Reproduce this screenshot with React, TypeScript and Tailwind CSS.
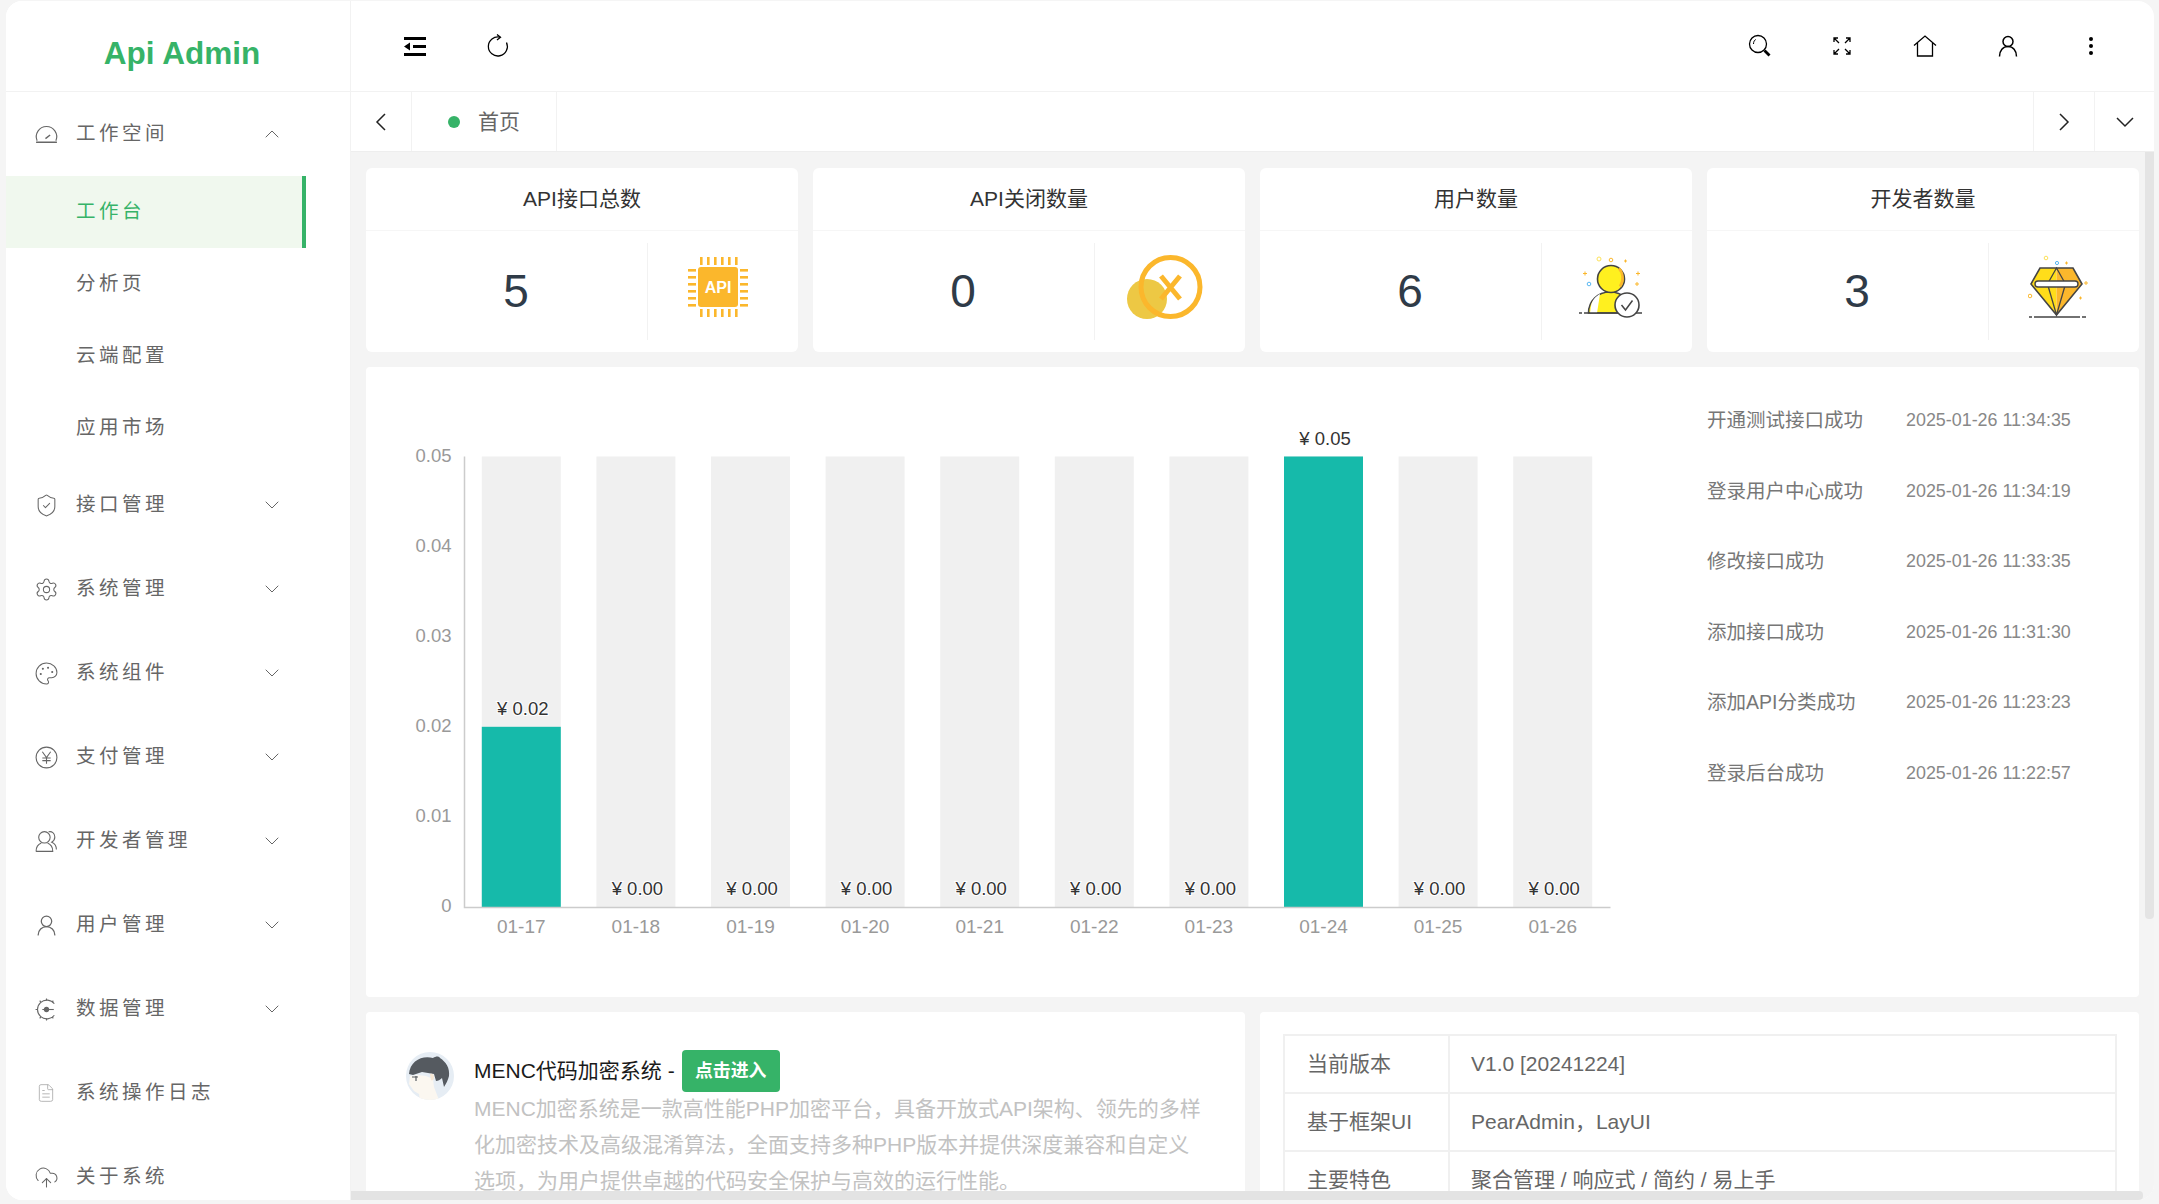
import type { ReactNode } from "react";
import { ChevronDown, ChevronUp, CloudUpload, FileText, Palette, Settings, ShieldCheck, UserRound } from "lucide-react";

const GaugeIcon = () => (
  <svg width="25" height="25" viewBox="0 0 24 24" fill="none" stroke="currentColor" strokeWidth="1.100">
    <path d="M3 18a9.800 9.800 0 1 1 18 0" />
    <path d="M2 19.500h20" strokeWidth="1.400" />
    <path d="M11 16l4.500-3.500" strokeWidth="1.400" />
  </svg>
);

const YenIcon = () => (
  <svg width="25" height="25" viewBox="0 0 24 24" fill="none" stroke="currentColor" strokeWidth="1.050">
    <circle cx="12" cy="12" r="10" />
    <path d="M8 6.500l4 5.500 4-5.500M12 12v6M8 12.500h8M8 15h8" />
  </svg>
);

const DataIcon = () => (
  <svg width="25" height="25" viewBox="0 0 24 24" fill="none" stroke="currentColor" strokeWidth="1.050">
    <path d="M19.500 6.500A9 9 0 1 0 19.500 17.500" />
    <path d="M12 1.500v1.800M5.500 3.500l1 1.400M18.500 3.500l-1 1.400M12 20.700v1.800M5.500 20.500l1-1.400M18.500 20.500l-1-1.400M1.500 12h1.800" />
    <path d="M8 12h11" />
    <circle cx="12" cy="12" r="2" fill="currentColor" />
  </svg>
);

const DevIcon = () => (
  <svg width="25" height="25" viewBox="0 0 24 24" fill="none" stroke="currentColor" strokeWidth="1.050">
    <circle cx="10" cy="8" r="5.500" />
    <path d="M2 21.500c0-4.500 2.500-7 5-8M13 13.500c2.500 1 5 3.500 5 8H2" />
    <path d="M14 2.700c3-.7 6 1 6 5 0 2.500-1.500 4-3 5 2.500 1 4.500 4 4.500 7" />
  </svg>
);

const menuTop = [
  { label: "接口管理", icon: <ShieldCheck size={25} strokeWidth={1} />, arrow: true },
  { label: "系统管理", icon: <Settings size={25} strokeWidth={1} />, arrow: true },
  { label: "系统组件", icon: <Palette size={25} strokeWidth={1} />, arrow: true },
  { label: "支付管理", icon: <YenIcon />, arrow: true },
  { label: "开发者管理", icon: <DevIcon />, arrow: true },
  { label: "用户管理", icon: <UserRound size={25} strokeWidth={1.2} />, arrow: true },
  { label: "数据管理", icon: <DataIcon />, arrow: true },
  { label: "系统操作日志", icon: <FileText size={20} strokeWidth={1} className="ml-[2px] text-[#aaa]" />, arrow: false },
  { label: "关于系统", icon: <CloudUpload size={25} strokeWidth={1} />, arrow: false },
];

function ApiIcon() {
  const pins = [12, 19, 26, 33, 40, 47];
  return (
    <svg width="60" height="60" viewBox="0 0 60 60">
      {pins.map((p) => (
        <g key={p} fill="#fbb72c">
          <rect x={p} y="0" width="2.6" height="8" />
          <rect x={p} y="52" width="2.6" height="8" />
          <rect x="0" y={p} width="8" height="2.6" />
          <rect x="52" y={p} width="8" height="2.6" />
        </g>
      ))}
      <rect x="10" y="10" width="40" height="40" rx="3" fill="#fbb72c" />
      <text x="30" y="35.5" textAnchor="middle" fontSize="16" fontWeight="700" fill="#fff">API</text>
    </svg>
  );
}

function CloseIcon() {
  return (
    <svg width="76" height="64" viewBox="0 0 76 64" fill="none">
      <circle cx="20" cy="44" r="20" fill="#edc844" />
      <circle cx="43.5" cy="32" r="29.5" stroke="#fbb72c" strokeWidth="5" />
      <path d="M34 21l19 23M53 21L34 44" stroke="#fbb72c" strokeWidth="5" />
    </svg>
  );
}

function UserBadgeIcon() {
  return (
    <svg width="66" height="62" viewBox="0 0 66 62" fill="none">
      <path d="M9.5 57c0-12 9-21 21.5-21s22 9 22 21z" fill="#fff01f" stroke="#444" strokeWidth="1.5" />
      <path d="M12 50c1-6 5-10 9-12l-3 19h-7z" fill="#fff" />
      <ellipse cx="32" cy="23" rx="13.5" ry="13.5" fill="#fff01f" stroke="#444" strokeWidth="1.6" />
      <path d="M40 12.5c4 4 5 12 1 18" stroke="#fbb72c" strokeWidth="2.5" />
      <path d="M0 57h66" stroke="#444" strokeWidth="1.5" strokeDasharray="3 2 50 2 6" />
      <circle cx="48" cy="49" r="12" fill="#fff" stroke="#444" strokeWidth="1.6" />
      <path d="M42.5 49l4 5 7-9.5" stroke="#444" strokeWidth="1.5" />
      <circle cx="10" cy="28" r="1.8" stroke="#5ab8f2" />
      <circle cx="20" cy="3" r="2" stroke="#fde25a" />
      <circle cx="32" cy="4" r="1.8" stroke="#fbb72c" />
      <path d="M45 5h3M46.500 3.500v3M4 17.500h4M6 15.500v4M57 17.500h4M59 15.500v4M56 28h4M58 26v4" stroke="#fbb72c" />
    </svg>
  );
}

function DiamondIcon() {
  return (
    <svg width="62" height="63" viewBox="0 0 62 63" fill="none">
      <path d="M12 13h16.500v47L3 29z" fill="#ffdd1a" />
      <path d="M28.500 13H45l9 16-25.500 31z" fill="#fbb72c" />
      <path d="M12 13h33l9 16-25.500 31L3 29z" stroke="#444" strokeWidth="1.6" />
      <path d="M28.500 13l-9 16 9 31 9-31zM19 29h19" stroke="#444" strokeWidth="1.3" />
      <rect x="7" y="26" width="43" height="6" rx="3" fill="#fff" stroke="#444" strokeWidth="1.4" />
      <path d="M1 62h57" stroke="#444" strokeWidth="1.6" strokeDasharray="3 2 46 2 4" />
      <circle cx="18" cy="3" r="1.8" stroke="#fde25a" />
      <circle cx="29" cy="8" r="1.6" stroke="#5ab8f2" />
      <circle cx="2" cy="41" r="1.8" stroke="#fbb72c" />
      <path d="M37 8h3M38.500 6.500v3M56 28h4M58 26v4M51 43h3M52.500 41.500v3" stroke="#fbb72c" />
    </svg>
  );
}

const stats: { title: string; value: number; icon: ReactNode }[] = [
  { title: "API接口总数", value: 5, icon: <ApiIcon /> },
  { title: "API关闭数量", value: 0, icon: <CloseIcon /> },
  { title: "用户数量", value: 6, icon: <UserBadgeIcon /> },
  { title: "开发者数量", value: 3, icon: <DiamondIcon /> },
];

const logs = [
  ["开通测试接口成功", "2025-01-26 11:34:35"],
  ["登录用户中心成功", "2025-01-26 11:34:19"],
  ["修改接口成功", "2025-01-26 11:33:35"],
  ["添加接口成功", "2025-01-26 11:31:30"],
  ["添加API分类成功", "2025-01-26 11:23:23"],
  ["登录后台成功", "2025-01-26 11:22:57"],
];

const bars = [
  { day: "01-17", value: 0.02 },
  { day: "01-18", value: 0 },
  { day: "01-19", value: 0 },
  { day: "01-20", value: 0 },
  { day: "01-21", value: 0 },
  { day: "01-22", value: 0 },
  { day: "01-23", value: 0 },
  { day: "01-24", value: 0.05 },
  { day: "01-25", value: 0 },
  { day: "01-26", value: 0 },
];

const tableRows = [
  ["当前版本", "V1.0 [20241224]"],
  ["基于框架UI", "PearAdmin，LayUI"],
  ["主要特色", "聚合管理 / 响应式 / 简约 / 易上手"],
];

function Chart() {
  // page x/y minus the card origin (366, 367)
  const top = 89.5;
  const bottom = 540;
  const left = 98;
  const band = 114.6;
  const h = bottom - top;
  return (
    <svg width="1300" height="630" viewBox="0 0 1300 630" className="shrink-0">
      {[0.05, 0.04, 0.03, 0.02, 0.01, 0].map((t) => (
        <text key={t} x="85.500" y={bottom - h * (t / 0.05) + 5} textAnchor="end" fontSize="18.500" fill="#999">{t}</text>
      ))}
      {bars.map((b, i) => {
        const x = left + band * i + 17.8;
        const bh = h * (b.value / 0.05);
        const cx = x + 39.5;
        return (
          <g key={b.day}>
            <rect x={x} y={top} width="79" height={h} fill="#f0f0f0" />
            <rect x={x} y={bottom - bh} width="79" height={bh} fill="#16baaa" />
            <text x={cx + 1.5} y={bottom - bh - 12} textAnchor="middle" fontSize="18.500" fill="#333" stroke="#fff" strokeWidth="2" paintOrder="stroke">¥ {b.value.toFixed(2)}</text>
            <text x={cx} y={566} textAnchor="middle" fontSize="19" fill="#999">{b.day}</text>
          </g>
        );
      })}
      <path d="M98.500 89.500V540.500H1244.500" fill="none" stroke="#ccc" strokeWidth="1.500" />
    </svg>
  );
}

function Avatar() {
  return (
    <svg width="48" height="48" viewBox="0 0 48 48" className="shrink-0">
      <defs>
        <clipPath id="avatar-clip"><circle cx="24" cy="24" r="24" /></clipPath>
      </defs>
      <g clipPath="url(#avatar-clip)">
        <rect width="48" height="48" fill="#e6edf4" />
        <path d="M3 22C4 9 16 3 27 6c3-2 6-2 7 0 6 4 10 10 9 18-1 4-3 8-5 11l-2-9c-2 2-4 3-6 3l-2-7-12-2-6 2-3 1z" fill="#555a60" />
        <path d="M4 24l8-1 8 1 7 3 1 8 5 13H14l-1-6-5-3-5-7z" fill="#fbf7f0" />
        <path d="M10 24v5M6 25h6" stroke="#555a60" strokeWidth="1.200" />
        <path d="M24 22c2-1 4 0 4 3s-2 4-3 3z" fill="#f6e7d4" />
      </g>
    </svg>
  );
}

const iconSvg = "block fill-none stroke-black";

function TopIcons() {
  return (
    <div className="ml-auto flex items-center">
      <span className="flex w-[83px] justify-center pl-[3px]">
        <svg width="24" height="24" viewBox="0 0 24 24" className={iconSvg} strokeWidth="1.300">
          <circle cx="10" cy="10" r="8.500" />
          <path d="M5.500 10c0-2.200.9-3.800 2.200-4.500" strokeWidth="1" />
          <path d="M16.500 16.500l5 5" strokeWidth="2.800" />
        </svg>
      </span>
      <span className="flex w-[83px] justify-center pl-px">
        <svg width="20" height="20" viewBox="0 0 20 20" className={iconSvg} strokeWidth="1.300">
          <path d="M2 6V2h4M2 2l5 5M18 6V2h-4M18 2l-5 5M2 14v4h4M2 18l5-5M18 14v4h-4M18 18l-5-5" />
        </svg>
      </span>
      <span className="flex w-[83px] justify-center pl-px">
        <svg width="24" height="22" viewBox="0 0 24 22" className={iconSvg} strokeWidth="1.300">
          <path d="M1 10.500L12 1l11 9.500M4.500 8v13h15V8" />
        </svg>
      </span>
      <span className="flex w-[83px] justify-center">
        <svg width="20" height="22" viewBox="0 0 20 22" className={iconSvg} strokeWidth="1.500">
          <circle cx="10" cy="6.500" r="5" />
          <path d="M1.500 21.500c0-6 3.500-10 8.500-10s8.500 4 8.500 10" />
        </svg>
      </span>
      <span className="flex w-[83px] justify-center">
        <svg width="6" height="20" viewBox="0 0 6 20"><circle cx="3" cy="3" r="2" /><circle cx="3" cy="10" r="2" /><circle cx="3" cy="17" r="2" /></svg>
      </span>
    </div>
  );
}

export default function App() {
  return (
    <div className="h-screen overflow-hidden bg-[#f5f5f5] pt-px pr-[5px] pb-[4px] pl-[6px] [font-family:'Liberation_Sans','Noto_Sans_CJK_SC',sans-serif]">
      <div className="flex h-full overflow-hidden rounded-[16px] bg-white">
        {/* sidebar */}
        <aside className="h-full w-[345px] shrink-0 overflow-hidden border-r border-[#f2f2f2] bg-white text-[19.500px] text-[#666]">
          <div className="flex h-[91px] items-center justify-center border-b border-[#f2f2f2] pt-[16px] pl-[8px] text-[31.500px] font-bold text-[#36b368]">
            Api Admin
          </div>
          <div className="flex h-[84px] items-center pl-[28px] pr-[66px]">
            <span className="flex w-[42px] shrink-0"><GaugeIcon /></span>
            <span className="tracking-[3.500px]">工作空间</span>
            <ChevronUp size={24} strokeWidth={1} className="ml-auto" />
          </div>
          <div className="flex h-[72px] w-[300px] items-center border-r-[4px] border-[#36b368] bg-[#f0f8ee] pl-[70px] tracking-[3.500px] text-[#36b368]">工作台</div>
          <div className="flex h-[72px] items-center pl-[70px] tracking-[3.500px]">分析页</div>
          <div className="flex h-[72px] items-center pl-[70px] tracking-[3.500px]">云端配置</div>
          <div className="flex h-[71px] items-center pl-[70px] tracking-[3.500px]">应用市场</div>
          {menuTop.map((item) => (
            <div key={item.label} className="flex h-[84px] items-center pl-[28px] pr-[66px]">
              <span className="flex w-[42px] shrink-0">{item.icon}</span>
              <span className="tracking-[3.500px]">{item.label}</span>
              {item.arrow && <ChevronDown size={24} strokeWidth={1} className="ml-auto" />}
            </div>
          ))}
        </aside>

        <main className="relative flex min-w-0 flex-1 flex-col">
          {/* top bar */}
          <header className="flex h-[91px] shrink-0 items-center border-b border-[#f2f2f2] pr-[22px]">
            <span className="ml-[53px] flex w-[22px]">
              <svg width="22" height="19" viewBox="0 0 22 19">
                <path d="M0 0h22v3H0zM9 8h13v3H9zM0 16h22v3H0zM0 9.500l6-4v8z" />
              </svg>
            </span>
            <span className="ml-[60px] flex">
              <svg width="24" height="24" viewBox="0 0 24 24" className="fill-none stroke-black" strokeWidth="1.300">
                <path d="M14 3.200A9.500 9.500 0 1 0 20.500 8.500" />
                <path d="M11 .5l3.500 2.700L11 6" />
              </svg>
            </span>
            <TopIcons />
          </header>

          {/* tab bar */}
          <nav className="flex h-[60px] shrink-0 items-center border-b border-[#eeeeee] text-[21px] text-[#666]">
            <span className="flex h-full w-[61px] items-center justify-center border-r border-[#f2f2f2]">
              <svg width="12" height="20" viewBox="0 0 12 20" className="fill-none stroke-[#222]" strokeWidth="1.500"><path d="M10 2L2 10l8 8" /></svg>
            </span>
            <span className="flex h-full w-[145px] items-center border-r border-[#f2f2f2] pl-[36px]">
              <span className="mr-[18px] size-[12px] rounded-full bg-[#36b368]" />
              首页
            </span>
            <span className="ml-auto flex h-full w-[61px] items-center justify-center border-l border-[#f2f2f2]">
              <svg width="12" height="20" viewBox="0 0 12 20" className="fill-none stroke-[#222]" strokeWidth="1.500"><path d="M2 2l8 8-8 8" /></svg>
            </span>
            <span className="flex h-full w-[60px] items-center justify-center border-l border-[#f2f2f2]">
              <svg width="20" height="12" viewBox="0 0 20 12" className="fill-none stroke-[#222]" strokeWidth="1.500"><path d="M2 2l8 8 8-8" /></svg>
            </span>
          </nav>

          {/* content */}
          <div className="relative min-h-0 flex-1 overflow-hidden bg-[#f4f4f4] pt-[16px] pl-[15px]">
            <div className="grid w-[1773px] grid-cols-4 gap-[15px]">
              {stats.map((s) => (
                <div key={s.title} className="h-[184px] rounded-[6px] bg-white">
                  <div className="flex h-[63px] items-center justify-center border-b border-[#f6f6f6] text-[21px] text-[#333]">{s.title}</div>
                  <div className="flex h-[121px] py-[12px]">
                    <div className="flex w-[282px] items-center justify-center border-r border-[#f2f2f2] pl-[19px] text-[46px] text-[#2f3b48]">{s.value}</div>
                    <div className="flex flex-1 items-center justify-center pr-[11px] pb-[10px]">{s.icon}</div>
                  </div>
                </div>
              ))}
            </div>

            <div className="mt-[15px] flex h-[630px] w-[1773px] rounded-[4px] bg-white">
              <Chart />
              <ul className="ml-[41px] pt-[37px]">
                {logs.map(([msg, time]) => (
                  <li key={time} className="flex h-[70.600px] w-[400px] items-start">
                    <span className="w-[199px] shrink-0 text-[19.500px] leading-[32px] text-[#777]">{msg}</span>
                    <span className="text-[17.900px] leading-[32px] text-[#888]">{time}</span>
                  </li>
                ))}
              </ul>
            </div>

            <div className="mt-[15px] flex w-[1773px] gap-[15px]">
              <div className="h-[300px] w-[879px] rounded-[4px] bg-white pt-[38px] pl-[40px]">
                <div className="flex">
                  <div className="mr-[20px] mt-[2px] shrink-0"><Avatar /></div>
                  <div className="w-[735px]">
                    <div className="flex h-[42px] items-center text-[21px] text-[#1a1a1a]">
                      MENC代码加密系统 -
                      <span className="ml-[7px] flex h-[42px] w-[98px] items-center justify-center rounded-[4px] bg-[#36b368] text-[17.900px] font-bold text-white">点击进入</span>
                    </div>
                    <p className="-mt-px text-[21px] leading-[36px] text-[#c2c2c2]">
                      MENC加密系统是一款高性能PHP加密平台，具备开放式API架构、领先的多样化加密技术及高级混淆算法，全面支持多种PHP版本并提供深度兼容和自定义选项，为用户提供卓越的代码安全保护与高效的运行性能。
                    </p>
                  </div>
                </div>
              </div>
              <div className="h-[300px] w-[879px] rounded-[4px] bg-white pt-[22px] pl-[23px]">
                <table className="w-[834px] table-fixed border-collapse text-[21px] text-[#666]">
                  <tbody>
                    {tableRows.map(([k, v]) => (
                      <tr key={k} className="h-[58px]">
                        <td className="w-[165px] border-2 border-[#f0f0f0] pl-[22px]">{k}</td>
                        <td className="border-2 border-[#f0f0f0] pl-[21px]">{v}</td>
                      </tr>
                    ))}
                  </tbody>
                </table>
              </div>
            </div>

            {/* scrollbars */}
            <div className="absolute top-0 right-0 h-[767px] w-[9px] rounded-b-[4px] bg-[#e4e4e4]" />
          </div>
          <div className="absolute right-[11px] bottom-0 left-0 h-[9px] rounded-r-[4px] bg-[#e3e3e3]" />
        </main>
      </div>
    </div>
  );
}
